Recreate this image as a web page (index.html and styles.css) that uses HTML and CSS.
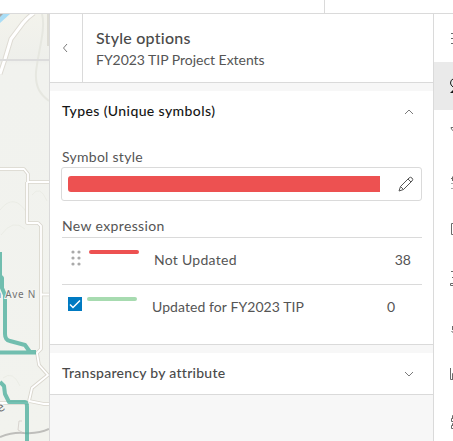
FILE: index.html
```html
<!DOCTYPE html>
<html lang="en">
<head>
<meta charset="utf-8">
<title>Style options</title>
<link rel="stylesheet" href="styles.css">
</head>
<body>
<div class="app">
  <header class="topbar"><div class="topbar-start"></div></header>
  <main class="workspace">
    <svg class="map" width="49" height="427" viewBox="0 14 49 427">
      <defs><linearGradient id="land" x1="0" y1="0" x2="0" y2="1"><stop offset="0" stop-color="#f3f3ec"/><stop offset=".11" stop-color="#eeefeb"/><stop offset=".12" stop-color="#f1f2ee"/><stop offset="1" stop-color="#f2f3ee"/></linearGradient></defs>
      <rect y="14" width="49" height="427" fill="url(#land)"/>
      <path d="M0 14H10L0 23Z" fill="#a9ddf6"/><path d="M0 14H3L0 17Z" fill="#aaa5a1"/>
      <g fill="none" stroke="#e6e7e0" stroke-width="2">
        <path d="M42 14C46 29 38 52 36 72C35 88 41 95 49 101"/>
        <path d="M0 210Q14 192 27 213M1 235Q13 218 25 229M32 195Q40 184 47 201M3 378Q13 370 20 386" stroke-width="1" opacity=".6"/>
        <path d="M48 14V46" stroke="#deddd5"/>
      </g>
      <g fill="none" stroke-linejoin="round">
        <path d="M34 13Q28 17 23 23L11 39L5 59L0 74" stroke="#dedbd3" stroke-width="5"/>
        <path d="M34 13Q28 17 23 23L11 39L5 59L0 74" stroke="#fff" stroke-width="3"/>
        <path d="M0 169H24L28 174V182H49M27 182V223H38L41 226V349L37 353L39 365L48 375L32 388L29 401L44 404H49M41 294.500H49M0 403H29" stroke="#d9d6cd" stroke-width="3.600"/>
        <path d="M0 169H24L28 174V182H49M27 182V223H38L41 226V349L37 353L39 365L48 375L32 388L29 401L44 404H49M41 294.500H49M0 403H29" stroke="#fff" stroke-width="1.800"/>
        <path d="M0 60H49" stroke="#dcdcdc" stroke-width="2"/>
        <path d="M0 437Q13 432 24 433Q39 434 49 429" stroke="#bebebb" stroke-width="2"/>
        <path d="M22 421H19L18 430L22 432" stroke="#d8d4cf"/>
        <path d="M0 252V276L2 278V288L5 295V334Q5 340 10 341L25 345L30 352H36M0 352.500H36M0 382L4 386L5 394L9 402H25Q27 402 27 407V441" stroke="#46ac99" stroke-width="4" opacity=".75"/>
      </g>
      <text x="-5" y="298" class="street">n Ave N</text>
      <text x="-3" y="412" class="street street-tilt">e</text>
    </svg>
    <section class="panel">
      <header class="panel-header">
        <button class="back" aria-label="Back"><svg width="16" height="16" viewBox="0 0 16 16"><path d="M9 4L5.500 8L9 12"/></svg></button>
        <div class="heading"><h1>Style options</h1><p>FY2023 TIP Project Extents</p></div>
      </header>
      <section class="block types">
        <div class="block-title"><h2 class="t-types">Types (Unique symbols)</h2><svg class="chevron" width="16" height="16" viewBox="0 0 16 16"><path d="M4 10L8 6L12 10"/></svg></div>
        <div class="label label-symbol">Symbol style</div>
        <div class="symbol-box"><div class="symbol-bar"></div>
          <svg class="pencil" width="16" height="16" viewBox="0 0 16 16"><path d="M1 15L2.500 10.500L11 2Q12.500 .5 14 2Q15.500 3.500 14 5L5.500 13.500ZM2.500 10.500L5.500 13.500M10 3L13 6"/></svg>
        </div>
        <div class="label label-expression">New expression</div>
        <div class="row"><svg class="handle" width="10" height="16" viewBox="0 0 10 16"><circle cx="2" cy="2" r="1.600"/><circle cx="8" cy="2" r="1.600"/><circle cx="2" cy="8" r="1.600"/><circle cx="8" cy="8" r="1.600"/><circle cx="2" cy="14" r="1.600"/><circle cx="8" cy="14" r="1.600"/></svg><i class="line red"></i><span class="name">Not Updated</span><span class="count">38</span></div>
        <div class="row checked"><svg class="check" width="14" height="14" viewBox="0 0 14 14"><path d="M2 7.500L5 10.500L12 3.500"/></svg><i class="line green"></i><span class="name">Updated for FY2023 TIP</span><span class="count">0</span></div>
      </section>
      <section class="block transparency">
        <div class="block-title"><h2>Transparency by attribute</h2><svg class="chevron" width="16" height="16" viewBox="0 0 16 16"><path d="M4 6L8 10L12 6"/></svg></div>
      </section>
    </section>
    <nav class="rail">
      <div class="tool"><svg viewBox="0 0 16 16"><path d="M1 3.500H15M1 8.500H15M1 13.500H15"/></svg></div>
      <div class="tool selected"><svg viewBox="0 0 16 16"><path d="M3 1Q.5 2 .5 5Q.5 7 3 9"/><path d="M0 15L3 12V15Z" class="solid"/></svg></div>
      <div class="tool"><svg viewBox="0 0 16 16"><path d="M1 1.500H15L10 8V15L6 12V8L1.500 3Z"/></svg></div>
      <div class="tool"><svg viewBox="0 0 16 16"><path d="M0 .5"/><path d="M1 4.500H4M2.500 2.500V7"/><path d="M1 9.500H4M1 14.500H15" class="faint"/></svg></div>
      <div class="tool"><svg viewBox="0 0 16 16"><path d="M1.500 1.500H14.500V12.500H1.500Z"/></svg></div>
      <div class="tool"><svg viewBox="0 0 16 16"><path d="M1 1.500H15M2 7.500H14M.5 15.500V13.500H15M.5 15.500H15"/></svg></div>
      <div class="tool"><svg viewBox="0 0 16 16"><path d="M2.500 8V12"/><path d="M1 13.500H3M2 14.500H8" class="faint"/></svg></div>
      <div class="tool"><svg viewBox="0 0 16 16"><path d="M.5 2V13.500H15M2.500 13V7.500H5V13"/></svg></div>
      <div class="tool"><svg viewBox="0 0 16 16"><path d="M5 1.500H2.500V4M5 4.500H1.500V7.500H5M5 9.500H2.500V12M5 11.500H1.500V14.500H5"/></svg></div>
    </nav>
  </main>
</div>
</body>
</html>
```
FILE: styles.css
```css
* { box-sizing: border-box; }
body { margin: 0; overflow: hidden; font-family: Lato, "Open Sans", sans-serif; font-size: 14px; color: #555; background: #fff; }
.app { width: 453px; height: 441px; overflow: hidden; display: flex; flex-direction: column; }
.topbar { height: 14px; flex: none; border-bottom: 1px solid #dadada; display: flex; }
.topbar-start { width: 325px; border-right: 1px solid #dadada; }
.workspace { height: 427px; display: grid; grid-template-columns: 49px 385px 19px; }
.map { display: block; }
.street { font: 10px "Noto Sans", sans-serif; letter-spacing: .7px; fill: #737373; stroke: #f5f5f1; stroke-width: 2px; paint-order: stroke; }
.street-tilt { font-size: 13px; transform: rotate(-35deg); transform-origin: 0 408px; }
.panel { background: #f7f7f7; border: solid #dadada; border-width: 0 1px; display: flex; flex-direction: column; gap: 8px; }
.panel-header { height: 69px; display: flex; background: #fff; border-bottom: 1px solid #dadada; }
.back { width: 33px; padding: 0; border: 0; border-right: 1px solid #dadada; background: none; display: grid; place-items: center; }
.panel path, .rail path { fill: none; stroke: #7a7a7a; }
.heading { padding: 13px 0 0 13px; white-space: nowrap; }
h1, h2, p { margin: 0; font-weight: 500; }
h1 { font-size: 16px; line-height: 22px; letter-spacing: .25px; }
p { font-size: 14px; line-height: 22px; font-weight: 400; letter-spacing: -.03px; }
.block { background: #fff; border-bottom: 1px solid #dadada; padding: 0 11px 0 12px; }
.types { height: 254px; }
.transparency { height: 42px; }
.block-title { height: 41px; display: flex; align-items: center; justify-content: space-between; padding-right: 5px; }
h1, h2 { color: #4a4a4a; }
h2 { font-size: 14px; line-height: 20px; margin-top: -2px; white-space: nowrap; letter-spacing: .27px; }
.t-types { color: #151515; letter-spacing: .4px; }
.label { line-height: 20px; }
.label-symbol { padding-top: 15px; height: 35px; letter-spacing: .27px; }
.label-expression { height: 36px; padding-top: 15px; letter-spacing: .36px; }
.symbol-box { height: 34px; width: 361px; margin-left: -1px; padding: 0 7px 0 6px; border: 1px solid #dadada; border-radius: 3px; display: flex; align-items: center; justify-content: space-between; }
.symbol-bar { width: 312px; height: 16px; background: #ed5151; border-radius: 3px 0 0 3px; }
.panel .pencil path { stroke: #555; }
.row { height: 47px; width: 360px; border-top: 1px solid #dadada; padding: 12px 11px 0 9px; display: flex; align-items: flex-start; }
.row.checked { padding: 12px 27px 0 6px; }
.handle { fill: #aaa; }
.line { width: 50px; height: 4px; border-radius: 2px; margin-left: 8px; }
.checked .line { margin-left: 5px; }
.red { background: #ed5151; }
.green { background: #a7dbb0; }
.name, .count { line-height: 20px; }
.name { margin-left: 15px; letter-spacing: .28px; }
.checked .name { letter-spacing: .08px; }
.count { margin-left: auto; }
.check { background: #007ac2; }
.panel .check path { stroke: #fff; stroke-width: 1.500; }
.rail { overflow: hidden; }
.tool { width: 48px; height: 48px; padding: 16px; }
.tool svg { width: 16px; height: 16px; display: block; }
.rail path { stroke: #6a6a6a; }
.rail .faint { stroke: #aaa; }
.selected { background: #eaeaea; }
.rail .selected path { stroke: #151515; }
.rail .selected .solid { fill: #151515; stroke: none; }
```
